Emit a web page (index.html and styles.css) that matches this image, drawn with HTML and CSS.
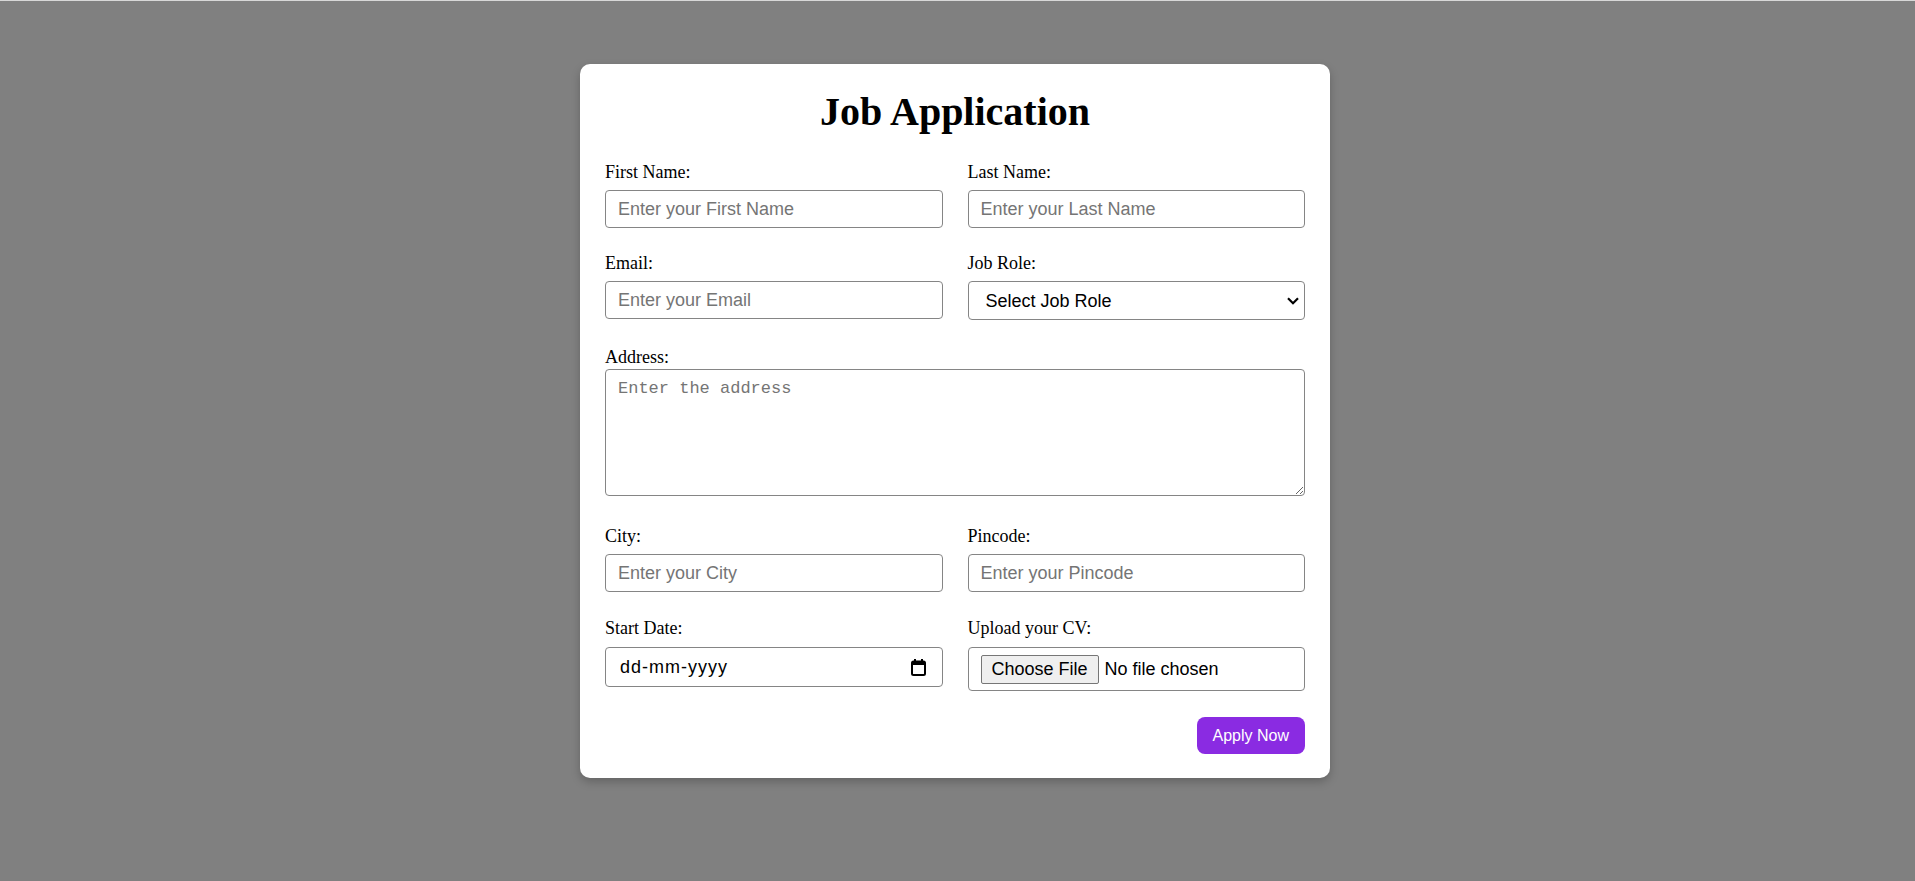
FILE: index.html
```html
<!DOCTYPE html>
<html lang="en">
<head>
<meta charset="utf-8">
<title>Job Application</title>
<link rel="stylesheet" href="styles.css">
</head>
<body>
<div class="page">
  <div class="card">
    <h1 class="title">Job Application</h1>
    <form class="form">
      <div class="row row-1">
        <div class="field">
          <label class="label" for="fname">First Name:</label>
          <input class="input" id="fname" type="text" placeholder="Enter your First Name">
        </div>
        <div class="field">
          <label class="label" for="lname">Last Name:</label>
          <input class="input" id="lname" type="text" placeholder="Enter your Last Name">
        </div>
      </div>
      <div class="row row-2">
        <div class="field">
          <label class="label" for="email">Email:</label>
          <input class="input" id="email" type="text" placeholder="Enter your Email">
        </div>
        <div class="field">
          <label class="label" for="role">Job Role:</label>
          <div class="select-wrap">
            <select class="select" id="role">
              <option>Select Job Role</option>
            </select>
            <svg class="chevron" width="12" height="8" viewBox="0 0 12 8"><path d="M1 1.2 L6 6.2 L11 1.2" fill="none" stroke="#000" stroke-width="2.2"/></svg>
          </div>
        </div>
      </div>
      <div class="block-address">
        <label class="label label-tight" for="addr">Address:</label>
        <textarea class="textarea" id="addr" placeholder="Enter the address"></textarea>
      </div>
      <div class="row row-3">
        <div class="field">
          <label class="label" for="city">City:</label>
          <input class="input" id="city" type="text" placeholder="Enter your City">
        </div>
        <div class="field">
          <label class="label" for="pin">Pincode:</label>
          <input class="input" id="pin" type="text" placeholder="Enter your Pincode">
        </div>
      </div>
      <div class="row row-4">
        <div class="field">
          <label class="label label-date">Start Date:</label>
          <div class="date-box">
            <span class="date-text">dd-mm-yyyy</span>
            <svg class="cal" width="15" height="17" viewBox="0 0 15 17"><rect x="1" y="2.5" width="13" height="13.5" rx="1.5" fill="none" stroke="#000" stroke-width="2"/><rect x="1" y="2.5" width="13" height="3.5" fill="#000"/><rect x="3" y="0" width="2" height="3.5" fill="#000"/><rect x="10" y="0" width="2" height="3.5" fill="#000"/></svg>
          </div>
        </div>
        <div class="field">
          <label class="label label-date" for="cv">Upload your CV:</label>
          <input class="file" id="cv" type="file">
        </div>
      </div>
      <div class="actions">
        <button class="apply" type="button">Apply Now</button>
      </div>
    </form>
  </div>
</div>
</body>
</html>
```
FILE: styles.css
```css
html, body {
  margin: 0;
  padding: 0;
}
body {
  background: #808080;
  border-top: 1px solid #d8d8d8;
  font-family: "Liberation Serif", "Times New Roman", serif;
}
.page {
  display: flex;
  justify-content: center;
  padding: 63px 5px 40px 0;
}
.card {
  width: 700px;
  padding: 25px 25px 24px;
  background: #ffffff;
  border-radius: 10px;
  box-shadow: 0 4px 10px rgba(0, 0, 0, 0.22);
}
.title {
  margin: 0 0 27px;
  font-size: 40px;
  line-height: 46px;
  font-weight: bold;
  text-align: center;
  color: #000;
}
.form {
  margin: 0;
}
.row {
  display: grid;
  grid-template-columns: 1fr 1fr;
  column-gap: 25px;
  align-items: start;
}
.row-1 { margin-bottom: 25px; }
.row-2 { margin-bottom: 27px; }
.row-3 { margin-bottom: 26px; }
.row-4 { margin-bottom: 26px; }
.block-address { margin-bottom: 30px; }
.field {
  display: flex;
  flex-direction: column;
}
.label {
  display: block;
  font-size: 18px;
  line-height: 21px;
  color: #000;
  margin-bottom: 7px;
}
.label-tight { margin-bottom: 1px; }
.label-date { margin-bottom: 8px; }
.input,
.select,
.textarea,
.file {
  box-sizing: border-box;
  width: 100%;
  border: 1px solid #858585;
  border-radius: 4px;
  background: #fff;
  margin: 0;
  font-family: "Liberation Sans", Arial, sans-serif;
  font-size: 18px;
  color: #000;
  outline: none;
}
.input {
  height: 38px;
  padding: 0 12px;
}
.input::placeholder,
.textarea::placeholder {
  color: #757575;
}
.select-wrap {
  position: relative;
}
.select {
  height: 39px;
  padding: 0 30px 0 17px;
  appearance: none;
  -webkit-appearance: none;
}
.chevron {
  position: absolute;
  right: 6px;
  top: 16px;
  pointer-events: none;
}
.textarea {
  display: block;
  height: 127px;
  padding: 9px 12px;
  font-family: "Liberation Mono", "Courier New", monospace;
  font-size: 17px;
  resize: vertical;
}
.date-box {
  box-sizing: border-box;
  height: 40px;
  border: 1px solid #858585;
  border-radius: 4px;
  display: flex;
  align-items: center;
  justify-content: space-between;
  padding: 0 16px 0 14px;
}
.date-text {
  font-family: "Liberation Sans", Arial, sans-serif;
  font-size: 18px;
  letter-spacing: 1px;
  color: #000;
}
.file {
  height: 44px;
  padding: 7px 12px 6px;
  line-height: 21px;
}
.file::file-selector-button {
  font-family: "Liberation Sans", Arial, sans-serif;
  font-size: 18px;
  height: 29px;
  padding: 0 10px;
  margin-right: 6px;
  border: 1px solid #767676;
  border-radius: 2px;
  background: #efefef;
  color: #000;
}
.actions {
  display: flex;
  justify-content: flex-end;
}
.apply {
  box-sizing: border-box;
  height: 37px;
  padding: 0 16px;
  border: none;
  border-radius: 8px;
  background: #8a2be2;
  color: #fff;
  font-family: "Liberation Sans", Arial, sans-serif;
  font-size: 16px;
}
```
